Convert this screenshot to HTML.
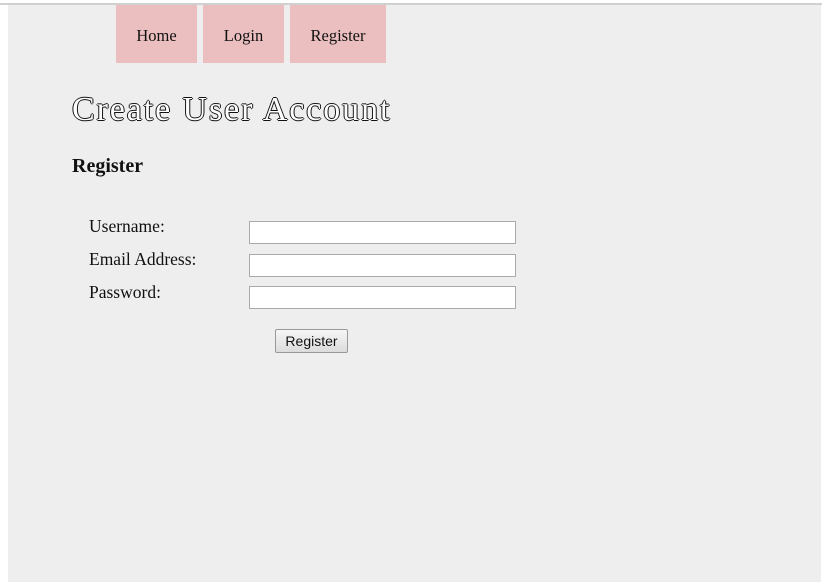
<!DOCTYPE html>
<html><head><style>
body{margin:0;background:#fff;width:829px;height:582px;overflow:hidden;position:relative;font-family:"Liberation Serif",serif;}
.top{position:absolute;left:0;top:3px;width:822px;height:2px;background:#d0d0d0}
.panel{position:absolute;left:8px;top:5px;width:813px;height:577px;background:#eeeeee}
.tab{position:absolute;top:5px;height:58px;background:#ebbfbf;color:#111;font-size:16.5px;line-height:62px;text-align:center}
h1{position:absolute;left:72px;top:91px;margin:0;font-size:34px;font-weight:normal;color:#fff;letter-spacing:1.9px;
text-shadow:-1px 0 #111,1px 0 #111,0 -1px #111,0 1px #111;}
h3{position:absolute;left:72px;top:155px;margin:0;font-size:20px;font-weight:bold;color:#111}
.lbl{position:absolute;left:89px;font-size:17.5px;color:#111}
.in{position:absolute;left:249px;width:265px;height:21px;background:#fff;border:1px solid #aaa;box-sizing:content-box}
.btn{position:absolute;left:275px;top:329px;width:71px;height:22px;border:1px solid #999;border-radius:2px;background:linear-gradient(#f6f6f6,#dcdcdc);font-family:"Liberation Sans",sans-serif;font-size:14px;line-height:22px;text-align:center;color:#111}
</style></head><body>
<div class="top"></div>
<div class="panel"></div>
<div class="tab" style="left:116px;width:81px">Home</div>
<div class="tab" style="left:203px;width:81px">Login</div>
<div class="tab" style="left:290px;width:96px">Register</div>
<h1>Create User Account</h1>
<h3>Register</h3>
<div class="lbl" style="top:216px">Username:</div>
<div class="lbl" style="top:249px">Email Address:</div>
<div class="lbl" style="top:282px">Password:</div>
<div class="in" style="top:221px"></div>
<div class="in" style="top:254px"></div>
<div class="in" style="top:286px"></div>
<div class="btn">Register</div>
</body></html>
